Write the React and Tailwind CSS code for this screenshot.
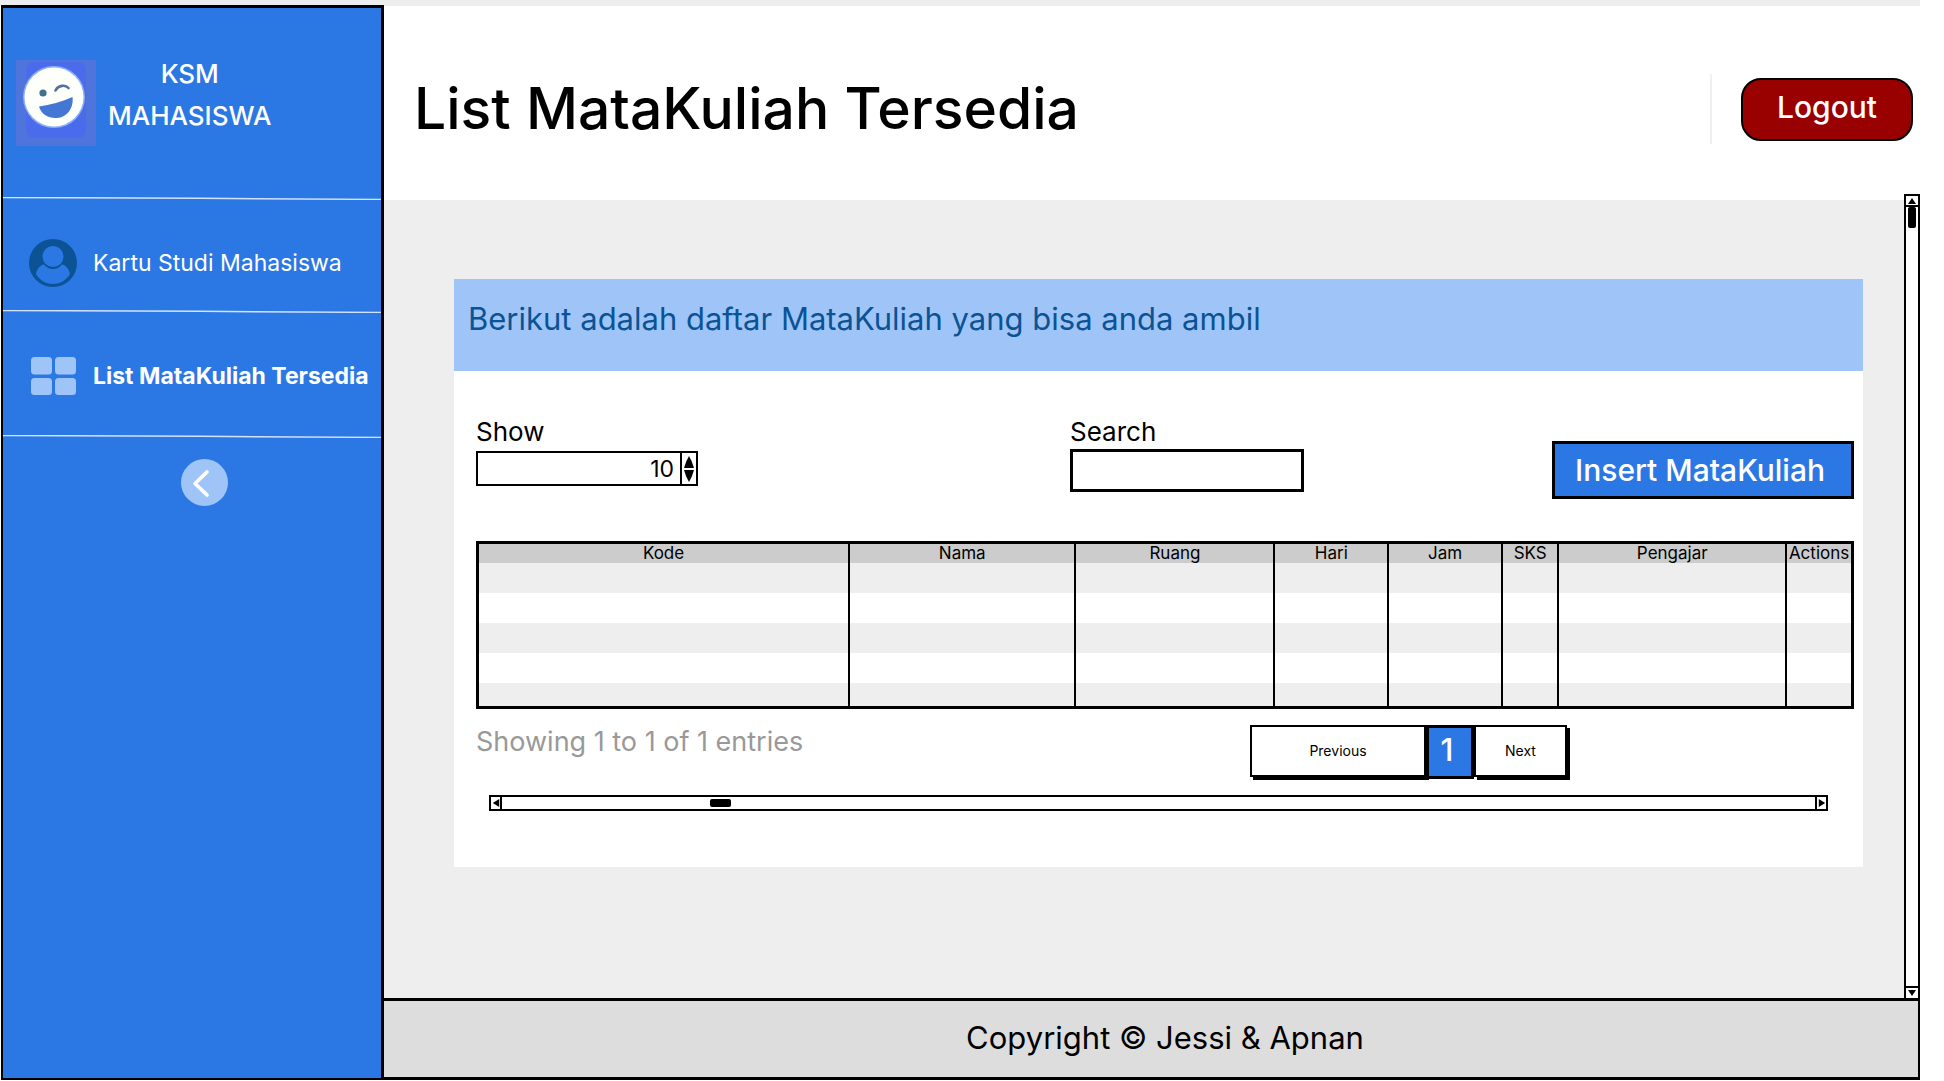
import React from "react";

const columns = [
  { name: "Kode", width: "w-[26.9%]" },
  { name: "Nama", width: "w-[16.5%]" },
  { name: "Ruang", width: "w-[14.5%]" },
  { name: "Hari", width: "w-[8.3%]" },
  { name: "Jam", width: "w-[8.3%]" },
  { name: "SKS", width: "w-[4.1%]" },
  { name: "Pengajar", width: "w-[16.6%]" },
  { name: "Actions", width: "w-[4.8%]" },
];

const rowHeights = ["h-[30px]", "h-[30px]", "h-[30px]", "h-[30px]", "h-[23px]"];

function WinkLogo() {
  return (
    <svg viewBox="0 0 80 86" className="h-[86px] w-20 shrink-0" role="img" aria-label="Logo">
      <rect width="80" height="86" fill="#4f74dc" />
      <rect x="10" y="2" width="60" height="76" rx="8" fill="#4a6cec" />
      <circle cx="38" cy="37" r="31" fill="#8fb0f4" />
      <circle cx="38" cy="37" r="29.5" fill="#fdfffb" />
      <circle cx="27" cy="33" r="3.6" fill="#41708f" />
      <path d="M39.500 30.500C42 25.500 49 24 52.500 28" fill="none" stroke="#5470a0" strokeWidth="2.600" strokeLinecap="round" />
      <path d="M23 46.500C34 45 46 41.500 56.500 37C58 48 51 57.500 41 58C32 58.500 25 54 23 46.500Z" fill="#4477d4" />
    </svg>
  );
}

function UserIcon() {
  return (
    <svg viewBox="0 0 48 48" className="size-12 shrink-0" aria-hidden="true">
      <circle cx="24" cy="24" r="24" fill="#0b5394" />
      <circle cx="24" cy="17.500" r="10.500" fill="#2b78e4" />
      <path d="M7 35C8 30 11 26 15 25.500C20 31.500 28 31.500 33 25.500C37 26 40 30 41 35C37 42 30 45 24 45C18 45 11 42 7 35Z" fill="#2b78e4" />
    </svg>
  );
}

function GridIcon() {
  return (
    <svg viewBox="0 0 48 40" className="h-10 w-12 shrink-0" fill="#9fc5f8" aria-hidden="true">
      <rect x="2" y="1" width="21" height="17.500" rx="3.500" />
      <rect x="26" y="1" width="21" height="17.500" rx="3.500" />
      <rect x="2" y="22" width="21" height="17" rx="3.500" />
      <rect x="26" y="22" width="21" height="17" rx="3.500" />
    </svg>
  );
}

function Arrow({ d, className }) {
  return (
    <svg viewBox="0 0 10 10" preserveAspectRatio="none" className={className} aria-hidden="true">
      <path d={d} fill="#000" />
    </svg>
  );
}

function Divider() {
  return (
    <svg viewBox="0 0 384 3" preserveAspectRatio="none" className="h-[3px] w-full shrink-0" aria-hidden="true">
      <path d="M0 0.500L200 1.300L384 2.400" fill="none" stroke="#d3e3fb" strokeWidth="1.500" />
    </svg>
  );
}

function Sidebar() {
  return (
    <aside className="-mt-px ml-px flex w-[383px] shrink-0 flex-col border-2 border-t-[3px] border-r-[3px] border-black bg-[#2b78e4] text-white">
      <div className="flex h-[189px] items-start gap-3 pt-[52px] pl-[13px]">
        <WinkLogo />
        <p className="-mt-[7px] text-center text-[26px] leading-[42px] font-medium">
          KSM
          <br />
          MAHASISWA
        </p>
      </div>
      <Divider />
      <nav aria-label="Menu" className="flex flex-col">
        <a href="#kartu" className="flex h-[110px] items-center gap-4 pt-4 pl-[26px] text-[23px] leading-8 whitespace-nowrap">
          <UserIcon />
          Kartu Studi Mahasiswa
        </a>
        <Divider />
        <a href="#list" aria-current="page" className="flex h-[122px] items-center gap-4 pt-1 pl-[26px] text-[23px] leading-8 font-bold whitespace-nowrap">
          <GridIcon />
          List MataKuliah Tersedia
        </a>
      </nav>
      <Divider />
      <button type="button" aria-label="Collapse menu" className="mt-[21px] ml-[178px] size-[47px]">
        <svg viewBox="0 0 47 47" className="size-full" aria-hidden="true">
          <circle cx="23.500" cy="23.500" r="23.500" fill="#9fc5f8" />
          <path d="M26 13L14 24.500L26 36" fill="none" stroke="#fff" strokeWidth="3.600" strokeLinecap="round" strokeLinejoin="round" />
        </svg>
      </button>
    </aside>
  );
}

function Header() {
  return (
    <header className="flex h-[194px] items-center pt-3 pr-[7px] pl-[30px]">
      <h1 className="flex-1 text-[57px] leading-[72px] font-medium">List MataKuliah Tersedia</h1>
      <div className="mr-[29px] h-[70px] w-0.5 bg-[#f0f0f0]" />
      <button type="button" className="h-[63px] w-[172px] rounded-[20px] border-2 border-black bg-[#990000] pb-1 text-[30px] leading-8 font-medium text-white">
        Logout
      </button>
    </header>
  );
}

function Controls() {
  return (
    <div className="grid grid-cols-[594fr_482fr_302fr] items-start">
      <div>
        <label htmlFor="show" className="block pt-px text-[26px] leading-8">Show</label>
        <div className="mt-[3px] flex h-[35px] w-[222px] border-2 border-black">
          <input
            id="show"
            type="number"
            defaultValue="10"
            className="min-w-0 flex-1 appearance-none pr-1.5 text-right text-[23px] leading-7 outline-none [appearance:textfield] [&::-webkit-inner-spin-button]:appearance-none"
          />
          <div className="flex w-4 flex-col items-center justify-center gap-0.5 border-l-2 border-black">
            <button type="button" aria-label="Increase">
              <Arrow className="h-3 w-2.5" d="M5 0Q8 4 10 10H0Q2 4 5 0Z" />
            </button>
            <button type="button" aria-label="Decrease">
              <Arrow className="h-3 w-2.5" d="M0 0H10Q8 6 5 10Q2 6 0 0Z" />
            </button>
          </div>
        </div>
      </div>
      <div>
        <label htmlFor="search" className="block pt-px text-[26px] leading-8">Search</label>
        <input id="search" type="text" className="mt-px block h-[43px] w-[234px] border-[3px] border-black px-2 text-[23px] outline-none" />
      </div>
      <button type="button" className="mt-[26px] h-[58px] w-full border-[3px] border-black bg-[#2b78e4] pr-1.5 text-[30px] leading-8 font-medium whitespace-nowrap text-white">
        Insert MataKuliah
      </button>
    </div>
  );
}

function CourseTable() {
  return (
    <table className="mt-[42px] w-full table-fixed border-separate border-spacing-0 border-[3px] border-black">
      <thead>
        <tr className="bg-[#ccc]">
          {columns.map((c) => (
            <th key={c.name} scope="col" className={c.width + " h-[19px] overflow-hidden border-l-2 border-black p-0 text-[17px] leading-[19px] font-normal whitespace-nowrap first:border-l-0"}>
              {c.name}
            </th>
          ))}
        </tr>
      </thead>
      <tbody>
        {rowHeights.map((h, i) => (
          <tr key={i} className="odd:bg-[#eee] even:bg-white">
            {columns.map((c) => (
              <td key={c.name} className={h + " border-l-2 border-black p-0 first:border-l-0"} />
            ))}
          </tr>
        ))}
      </tbody>
    </table>
  );
}

function Pagination() {
  return (
    <div className="mt-4 grid grid-cols-[774fr_604fr] items-start">
      <p className="pt-px text-[27px] leading-8 text-[#999]">Showing 1 to 1 of 1 entries</p>
      <nav aria-label="Pagination" className="flex items-stretch text-sm">
        <button type="button" className="h-[52px] w-44 border-2 border-black bg-white shadow-[3px_3px_0_#000]">Previous</button>
        <button type="button" aria-current="page" className="relative h-[54px] w-12 border-[3px] border-black bg-[#2b78e4] pr-1.5 pb-1 text-[31px] leading-8 font-medium text-white">1</button>
        <button type="button" className="h-[52px] w-[93px] border-2 border-black bg-white shadow-[3px_3px_0_#000]">Next</button>
      </nav>
    </div>
  );
}

function HorizontalScroll() {
  return (
    <div className="mt-4 mr-[26px] ml-[13px] flex h-4 items-stretch border-2 border-black bg-white">
      <button type="button" aria-label="Scroll left" className="flex w-[11px] items-center justify-center border-r-2 border-black">
        <Arrow className="size-2" d="M1 5L9 0V10Z" />
      </button>
      <div className="flex flex-1 items-center pl-[15.6%]">
        <div className="h-2 w-[21px] rounded-xs bg-black" />
      </div>
      <button type="button" aria-label="Scroll right" className="flex w-[11px] items-center justify-center border-l-2 border-black">
        <Arrow className="size-2" d="M1 0L9 5L1 10Z" />
      </button>
    </div>
  );
}

function VerticalScroll() {
  return (
    <div className="-mt-1.5 flex w-4 shrink-0 flex-col border-2 border-b-0 border-black bg-white">
      <button type="button" aria-label="Scroll up" className="flex h-[11px] items-center justify-center border-b-2 border-black">
        <Arrow className="h-1.5 w-2" d="M5 0L10 10H0Z" />
      </button>
      <div className="flex-1">
        <div className="mx-auto h-[21px] w-2 rounded-xs bg-black" />
      </div>
      <button type="button" aria-label="Scroll down" className="flex h-3 items-center justify-center border-t-2 border-black">
        <Arrow className="h-1.5 w-2" d="M0 0H10L5 10Z" />
      </button>
    </div>
  );
}

export default function App() {
  return (
    <div className="flex min-h-screen flex-col bg-white pr-6 pb-px font-['Inter',sans-serif] text-black">
      <div className="h-1.5 bg-[#eee]" />
      <div className="flex flex-1">
        <Sidebar />
        <div className="flex min-w-0 flex-1 flex-col">
          <Header />
          <div className="flex flex-1 bg-[#eee]">
            <main className="min-w-0 flex-1 pt-[79px] pr-[41px] pb-10 pl-[70px]">
              <section className="bg-white">
                <h2 className="min-h-[92px] bg-[#9fc5f8] px-[14px] pt-6 text-[31px] leading-8 text-[#0b5394]">
                  Berikut adalah daftar MataKuliah yang bisa anda ambil
                </h2>
                <div className="pt-11 pr-[9px] pb-14 pl-[22px]">
                  <Controls />
                  <CourseTable />
                  <Pagination />
                  <HorizontalScroll />
                </div>
              </section>
            </main>
            <VerticalScroll />
          </div>
          <footer className="flex h-[82px] items-center justify-center border-y-[3px] border-r-2 border-black bg-[#ddd] pb-0.5 pl-7 text-[31px] leading-10">
            Copyright © Jessi &amp; Apnan
          </footer>
        </div>
      </div>
    </div>
  );
}
